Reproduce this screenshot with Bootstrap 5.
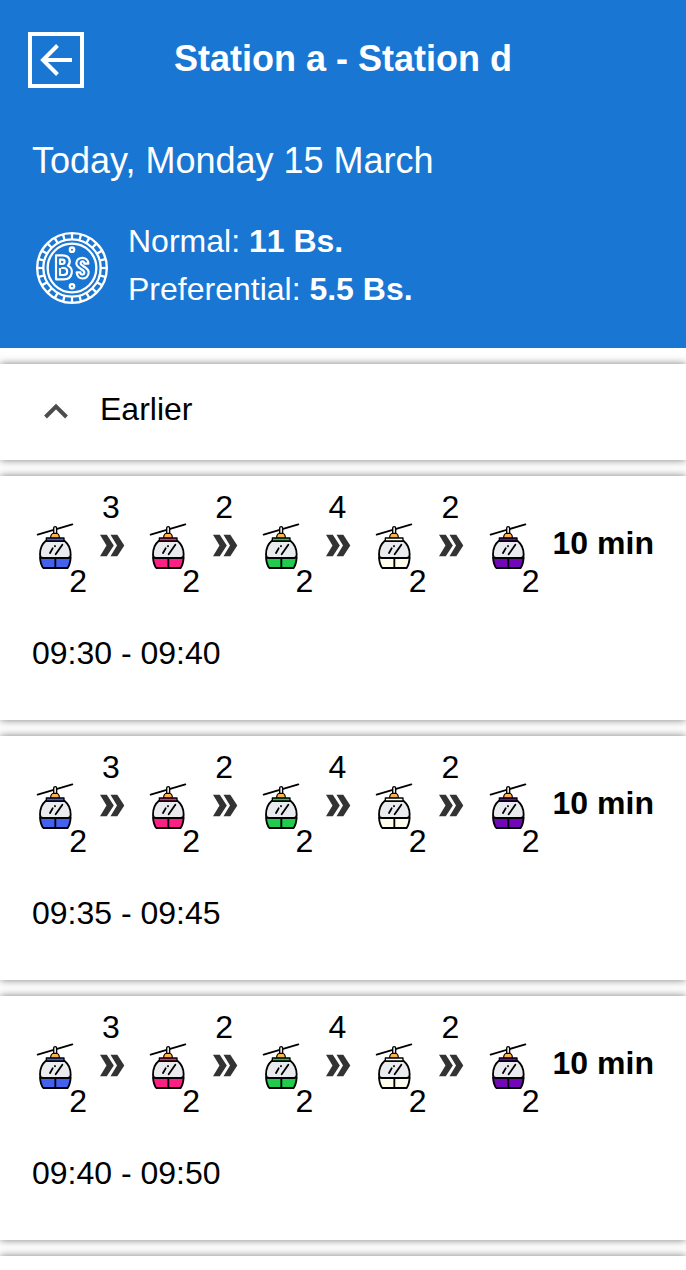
<!DOCTYPE html>
<html lang="en">
<head>
<meta charset="utf-8">
<meta name="viewport" content="width=device-width, initial-scale=1">
<title>Station a - Station d</title>
<link href="https://cdn.jsdelivr.net/npm/bootstrap@5.3.0/dist/css/bootstrap.min.css" rel="stylesheet">
<style>
  body { font-family: "Liberation Sans", Arial, sans-serif; font-size: 32px; line-height: 48px; color: #000; background: #fff; }
  svg { display: block; flex: none; }
  .trip-head { background: #1976d3; height: 348px; padding: 28px 28px 0; }
  .back-btn { width: 56px; height: 56px; border: 4px solid #fff; margin-top: 4px; }
  .trip-title { font-size: 36px; line-height: 62px; height: 60px; margin: 0 56px 0 0; }
  .trip-date { font-size: 36px; line-height: 50px; height: 48px; margin: 48px 0 0 4px; }
  .fares { margin-top: 33px; }
  .fares > div { margin-left: 10px; }
  .fares strong { font-kerning: none; }
  .panel { background: #fff; box-shadow: 0 0 8px rgba(0,0,0,.52); margin-top: 16px; }
  .earlier { height: 96px; padding: 0 32px 6px; }
  .ride { height: 244px; padding: 7px 32px 0; }
  .upcoming { height: 14px; }
  .leg { width: 113.15px; height: 122px; }
  .leg:last-of-type { width: 68px; }
  .cabin { width: 56px; padding-top: 35px; }
  .cabin svg { margin-bottom: -17px; }
  .cabin span { padding-right: 1px; }
  .hop { width: 46px; }
  .hop svg { margin: 3px 0 0 2px; }
  .total { padding-top: 36px; }
  .hours { margin-top: 24px; }
</style>
</head>
<body>
<svg width="0" height="0" class="position-absolute">
  <symbol id="cabin" viewBox="12 99 144 168">
    <g stroke="#000" stroke-width="5.500" stroke-linecap="round" stroke-linejoin="round">
      <path d="M29 149 133 118" fill="none"/>
      <path d="M68 160v-4q1-12 13-12t13 12v4z" fill="#fdb54b" stroke-width="3.500"/>
      <path d="M77 145v-16q0-4 4.500-4t4.500 4v16z" fill="#e8e8ec" stroke-width="4"/>
      <path d="M36 217h92c-1 15-5 26-9 32H46c-6-7-9-18-10-32z" fill="currentColor"/>
      <path d="M53 168h57c10 8 18 25 18 41q0 10-9 10H45q-9 0-9-10c0-16 7-33 17-41z" fill="#e9ebee"/>
      <path d="M55 168v-9h53v9z" fill="currentColor" stroke-width="4"/>
      <path d="M82 219v29M66 204l8-14M81 183v1M83 208l20-29" fill="none"/>
    </g>
  </symbol>
  <symbol id="next" viewBox="0 0 26 24">
    <path d="M1 .8h6.800l7 10.700-7 10.700H1l6.500-10.700zM11.500 .8h6.800l7 10.700-7 10.700h-6.800l6.500-10.700z" fill="#333"/>
  </symbol>
</svg>

<header class="trip-head text-white">
  <div class="d-flex">
    <a href="#" class="back-btn d-block flex-shrink-0" aria-label="Back">
      <svg width="48" height="48" viewBox="0 0 48 48" fill="none" stroke="#fff" stroke-width="4"><path d="M40 24H12M25.500 9.500 11 24l14.500 14.500"/></svg>
    </a>
    <h1 class="trip-title flex-grow-1 text-center fw-bold">Station a - Station d</h1>
  </div>
  <p class="trip-date">Today, Monday 15 March</p>
  <div class="fares d-flex">
    <svg width="90" height="90" viewBox="0 -21 270 270" fill="none" stroke="#fff" stroke-width="7">
      <circle cx="132" cy="132" r="104.500"/>
      <circle cx="132" cy="132" r="86"/>
      <circle cx="132" cy="132" r="73"/>
      <circle cx="132" cy="132" r="96" stroke-width="18" pathLength="240" stroke-dasharray="2.800 7.200" stroke-dashoffset="1.400"/>
      <circle cx="132" cy="77" r="6.500"/>
      <circle cx="132" cy="187" r="6.500"/>
      <g stroke-width="6.500" stroke-linejoin="round">
        <path d="M84 94h20c20 0 27 18 16 31 19 8 14 41-12 41H84z"/>
        <path d="M96 107h7c9 0 9 13 0 13h-7zM96 132v21h11c14 0 14-21 0-21h-7"/>
        <path d="M181 119c0-23-36-23-36-1 0 16 24 17 24 27 0 9-12 9-12 0h-11c0 25 36 24 36 0 0-16-24-18-24-27 0-8 11-8 11 1z"/>
      </g>
    </svg>
    <div>
      <div>Normal: <strong>11 Bs.</strong></div>
      <div>Preferential: <strong>5.5 Bs.</strong></div>
    </div>
  </div>
</header>

<main>
  <section class="panel earlier d-flex align-items-center">
    <svg width="48" height="48" viewBox="0 0 48 48" fill="none" stroke="#4d4d4d" stroke-width="4"><path d="M13.500 32 24 21.500 34.500 32"/></svg>
    <span class="ms-3 ps-1">Earlier</span>
  </section>
  <div id="rides"></div>
  <section class="panel upcoming"></section>
</main>

<script src="https://cdn.jsdelivr.net/npm/bootstrap@5.3.0/dist/js/bootstrap.bundle.min.js"></script>
<script>
  const legs = [['#4361ee', 3], ['#fc2085', 2], ['#20cb4d', 4], ['#fffdec', 2], ['#7207b8']];
  const legHtml = ([color, wait]) => `
    <div class="leg d-flex flex-shrink-0">
      <div class="cabin text-end">
        <svg width="48" height="56" style="color:${color}"><use href="#cabin"/></svg>
        <span>2</span>
      </div>
      ${wait ? `<div class="hop d-flex flex-column align-items-center">
        <span>${wait}</span>
        <svg width="26" height="24"><use href="#next"/></svg>
      </div>` : ''}
    </div>`;
  document.getElementById('rides').innerHTML = ['09:30 - 09:40', '09:35 - 09:45', '09:40 - 09:50'].map(hours => `
    <section class="panel ride">
      <div class="d-flex">
        ${legs.map(legHtml).join('')}
        <strong class="total text-nowrap">10 min</strong>
      </div>
      <div class="hours">${hours}</div>
    </section>`).join('');
</script>
</body>
</html>
